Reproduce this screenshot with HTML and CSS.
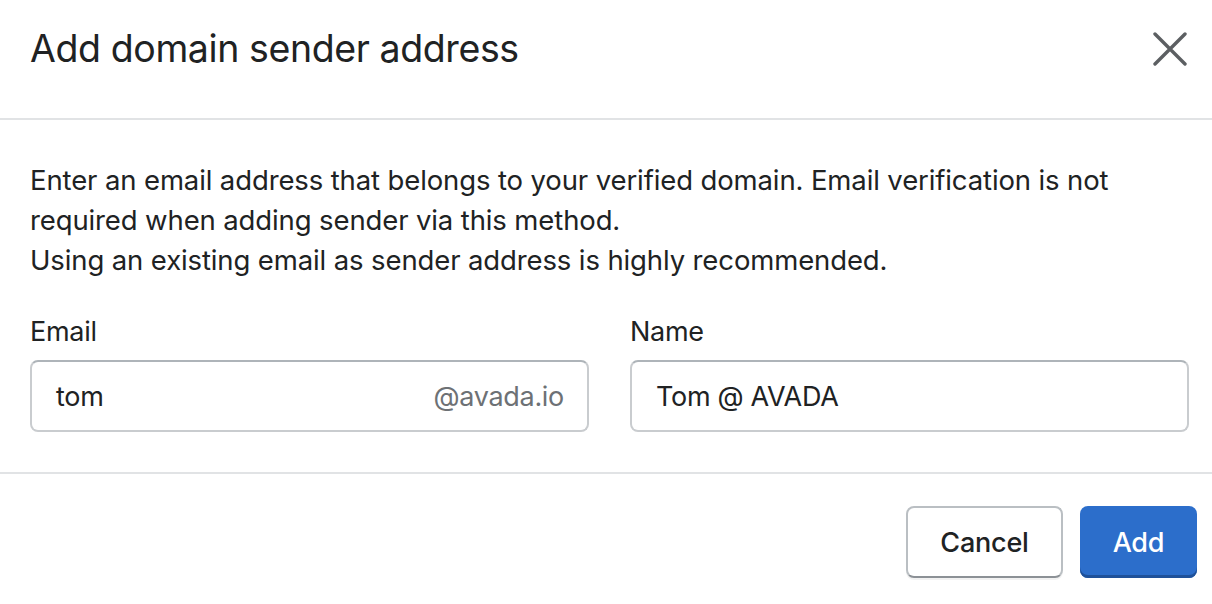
FILE: index.html
```html
<!DOCTYPE html>
<html lang="en">
<head>
<meta charset="utf-8">
<title>Add domain sender address</title>
<link rel="stylesheet" href="styles.css">
</head>
<body>
<div class="modal">
  <header class="modal-header">
    <h1 class="modal-title">Add domain sender address</h1>
    <button class="close-btn" aria-label="Close">
      <svg width="34" height="34" viewBox="0 0 34 34"><path d="M2 2 L32 32 M32 2 L2 32" stroke="#5c5f62" stroke-width="3.4" stroke-linecap="round" fill="none"/></svg>
    </button>
  </header>
  <section class="modal-body">
    <p class="intro">Enter an email address that belongs to your verified domain. Email verification is not required when adding sender via this method.<br>Using an existing email as sender address is highly recommended.</p>
    <div class="fields">
      <div class="field">
        <label class="field-label">Email</label>
        <div class="input">
          <span class="input-value">tom</span>
          <span class="input-suffix">@avada.io</span>
        </div>
      </div>
      <div class="field">
        <label class="field-label">Name</label>
        <div class="input">
          <span class="input-value">Tom @ AVADA</span>
        </div>
      </div>
    </div>
  </section>
  <footer class="modal-footer">
    <button class="btn btn-secondary">Cancel</button>
    <button class="btn btn-primary">Add</button>
  </footer>
</div>
</body>
</html>
```

FILE: styles.css
```css
* { box-sizing: border-box; }
html, body { margin: 0; padding: 0; background: #ffffff; }
body {
  font-family: Inter, "Noto Sans", "Liberation Sans", sans-serif;
  color: #202223;
  width: 1212px;
  height: 604px;
  overflow: hidden;
}
.modal { display: flex; flex-direction: column; }
.modal-header {
  height: 120px;
  border-bottom: 2px solid #e1e3e5;
  display: flex;
  align-items: center;
  justify-content: space-between;
  padding: 0 25px 20px 30px;
}
.modal-title {
  margin: 0;
  font-size: 37.5px;
  font-weight: 400;
  letter-spacing: -0.4px;
  line-height: 48px;
}
.close-btn {
  border: 0;
  background: transparent;
  padding: 0;
  width: 34px;
  height: 34px;
  display: flex;
}
.modal-body {
  padding: 40px 23px 40px 30px;
  border-bottom: 2px solid #e1e3e5;
}
.intro {
  margin: 0;
  font-size: 27.5px;
  letter-spacing: -0.12px;
  line-height: 40px;
}
.fields {
  display: grid;
  grid-template-columns: 1fr 1fr;
  column-gap: 41px;
  margin-top: 32px;
}
.field-label {
  display: block;
  font-size: 27px;
  line-height: 40px;
  margin-bottom: 8px;
  letter-spacing: -0.3px;
}
.input {
  height: 72px;
  border: 2px solid #c9cccf;
  border-top-color: #aeb4b9;
  border-radius: 8px;
  display: flex;
  align-items: center;
  justify-content: space-between;
  padding: 0 23px 0 24px;
  font-size: 27px;
  letter-spacing: -0.3px;
}
.input-suffix { color: #6d7175; }
.modal-footer {
  display: flex;
  justify-content: flex-end;
  gap: 17px;
  padding: 32px 15px 0 0;
}
.btn {
  height: 72px;
  border-radius: 8px;
  font-family: inherit;
  font-size: 27px;
  font-weight: 500;
  letter-spacing: -0.2px;
  padding: 0 32px;
}
.btn-secondary {
  width: 157px;
  background: #ffffff;
  color: #202223;
  border: 2px solid #babfc3;
  border-bottom-color: #8c9196;
  box-shadow: 0 2px 0 rgba(0,0,0,0.05);
}
.btn-primary {
  width: 117px;
  background: #2c6ecb;
  color: #ffffff;
  border: 0;
  box-shadow: inset 0 -3px 0 #1f5199;
}
```
